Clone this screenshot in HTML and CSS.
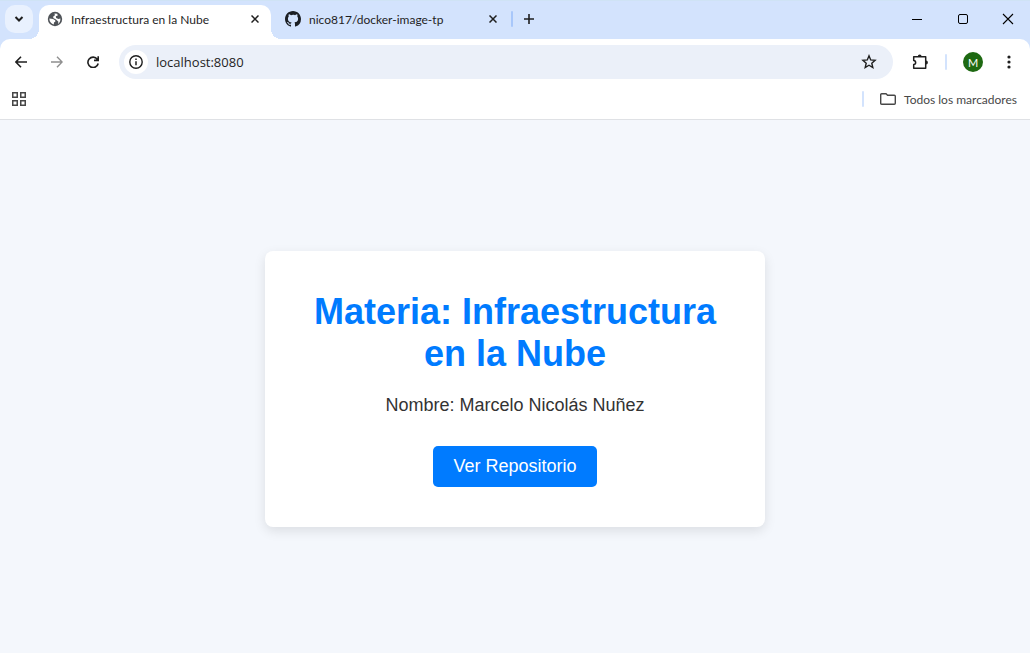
FILE: index.html
```html
<!DOCTYPE html>
<html lang="es">
<head>
<meta charset="utf-8">
<meta name="viewport" content="width=device-width, initial-scale=1">
<title>Infraestructura en la Nube</title>
<link rel="stylesheet" href="styles.css">
</head>
<body class="window">
<header class="chrome">
  <div class="tab-strip">
    <button class="tab-search" aria-label="Buscar pestañas">
      <svg width="10" height="8" viewBox="0 0 10 8"><path d="M1.5 2 5 5.5 8.5 2" fill="none" stroke="currentColor" stroke-width="2"/></svg>
    </button>
    <div class="tab tab-active">
      <svg class="favicon" width="16" height="16" viewBox="0 0 16 16"><circle cx="8" cy="8" r="7.2" fill="#4f5358"/><path d="M2.4 7.4 6 8.1 8.2 9.2 8.4 10.6 7 11.4 6.8 13.4C4.4 13 2.4 10.8 2.4 8ZM7.4 2.6 10.2 2.8 10.8 4.4 8.8 5.2 9.2 7 11.4 8 13.4 7.4C13.6 10 12.6 11.8 11 12.9L11.4 10.8 9 8.6 6.2 7 6.4 5.2 8 4.2Z" fill="#fff"/></svg>
      <span class="tab-title">Infraestructura en la Nube</span>
      <button class="tab-close" aria-label="Cerrar pestaña"><svg width="8" height="8" viewBox="0 0 8 8"><path d="m.5.5 7 7m0-7-7 7" stroke="currentColor" stroke-width="1.5"/></svg></button>
    </div>
    <div class="tab">
      <svg class="favicon" width="16" height="16" viewBox="0 0 16 16"><path fill="#1b1f24" d="M8 0C3.58 0 0 3.58 0 8c0 3.54 2.29 6.53 5.47 7.59.4.07.55-.17.55-.38 0-.19-.01-.82-.01-1.49-2.01.37-2.53-.49-2.69-.94-.09-.23-.48-.94-.82-1.13-.28-.15-.68-.52-.01-.53.63-.01 1.08.58 1.23.82.72 1.21 1.87.87 2.33.66.07-.52.28-.87.51-1.07-1.78-.2-3.64-.89-3.64-3.95 0-.87.31-1.59.82-2.15-.08-.2-.36-1.02.08-2.12 0 0 .67-.21 2.2.82A7.6 7.6 0 0 1 8 3.86c.68 0 1.36.09 2 .27 1.53-1.04 2.2-.82 2.2-.82.44 1.1.16 1.92.08 2.12.51.56.82 1.27.82 2.15 0 3.07-1.87 3.75-3.65 3.95.29.25.54.73.54 1.48 0 1.07-.01 1.93-.01 2.2 0 .21.15.46.55.38A8.01 8.01 0 0 0 16 8c0-4.42-3.58-8-8-8Z"/></svg>
      <span class="tab-title">nico817/docker-image-tp</span>
      <button class="tab-close" aria-label="Cerrar pestaña"><svg width="8" height="8" viewBox="0 0 8 8"><path d="m.5.5 7 7m0-7-7 7" stroke="currentColor" stroke-width="1.5"/></svg></button>
    </div>
    <span class="divider tab-divider"></span>
    <button class="new-tab" aria-label="Nueva pestaña"><svg width="10" height="10" viewBox="0 0 10 10"><path d="M5 0v10M0 5h10" stroke="currentColor" stroke-width="1.6"/></svg></button>
    <div class="window-controls">
      <button aria-label="Minimizar"><svg width="12" height="12" viewBox="0 0 12 12"><path d="M1 6.5h10" stroke="#000"/></svg></button>
      <button aria-label="Maximizar"><svg width="12" height="12" viewBox="0 0 12 12"><rect x="1.5" y="1.5" width="9" height="9" rx="1.5" fill="none" stroke="#000"/></svg></button>
      <button aria-label="Cerrar"><svg width="12" height="12" viewBox="0 0 12 12"><path d="m1 1 10 10M11 1 1 11" stroke="#000" stroke-width="1.1"/></svg></button>
    </div>
  </div>

  <div class="toolbar">
    <button class="tool" aria-label="Atrás"><svg width="12" height="12" viewBox="0 0 12 12"><path d="M12 6H1M6 .7.9 6 6 11.3" fill="none" stroke="currentColor" stroke-width="1.6"/></svg></button>
    <button class="tool" aria-label="Adelante" disabled><svg width="12" height="12" viewBox="0 0 12 12"><path d="M0 6h11M6 .7 11.1 6 6 11.3" fill="none" stroke="currentColor" stroke-width="1.4"/></svg></button>
    <button class="tool" aria-label="Recargar"><svg width="12" height="12" viewBox="0 0 12 12"><path d="M10.3 3.2A5.2 5.2 0 1 0 11.2 7.5M11.2.2v4.2H7" fill="none" stroke="currentColor" stroke-width="1.6"/></svg></button>
    <form class="address-bar">
      <button class="site-info" type="button" aria-label="Información del sitio"><svg width="14" height="14" viewBox="0 0 14 14"><circle cx="7" cy="7" r="6.2" fill="none" stroke="currentColor" stroke-width="1.4"/><path d="M7 6.2v4M7 3.6v1.5" stroke="currentColor" stroke-width="1.5"/></svg></button>
      <input class="address" type="text" value="localhost:8080" aria-label="Dirección" spellcheck="false">
      <button class="bookmark-star" type="button" aria-label="Añadir a marcadores"><svg width="16" height="16" viewBox="0 0 16 16"><path d="m8 1.8 1.7 4.1 4.4.4-3.3 2.9 1 4.3L8 11.2l-3.8 2.3 1-4.3-3.3-2.9 4.4-.4Z" fill="none" stroke="currentColor" stroke-width="1.4"/></svg></button>
    </form>
    <button class="extensions" aria-label="Extensiones"><svg width="18" height="18" viewBox="0 0 18 18"><path d="M2.7 3.7h12v11.6h-12v-3.7c2.6-.2 2.6-4 0-4.2Z" fill="none" stroke="currentColor" stroke-width="1.5" stroke-linejoin="round"/><path d="M6.8 3.4a1.9 1.9 0 0 1 3.8 0M15 7.6a1.9 1.9 0 0 1 0 3.8" fill="currentColor"/></svg></button>
    <span class="divider"></span>
    <button class="avatar" aria-label="Perfil">M</button>
    <button class="menu" aria-label="Menú"><svg width="4" height="14" viewBox="0 0 4 14"><g fill="currentColor"><circle cx="2" cy="2" r="1.6"/><circle cx="2" cy="7" r="1.6"/><circle cx="2" cy="12" r="1.6"/></g></svg></button>
  </div>

  <nav class="bookmarks" aria-label="Marcadores">
    <button class="apps" aria-label="Aplicaciones"><svg width="14" height="14" viewBox="0 0 14 14"><path d="M.75.75h4.5v4.5H.75ZM8.75.75h4.5v4.5h-4.5ZM.75 8.75h4.5v4.5H.75ZM8.75 8.75h4.5v4.5h-4.5Z" fill="none" stroke="currentColor" stroke-width="1.5"/></svg></button>
    <span class="divider"></span>
    <button class="all-bookmarks"><svg width="16" height="12" viewBox="0 0 16 12"><path d="M.7 1.7q0-1 1-1H6l1.6 1.6h6.7q1 0 1 1v7q0 1-1 1H1.7q-1 0-1-1Z" fill="none" stroke="currentColor" stroke-width="1.4"/></svg>Todos los marcadores</button>
  </nav>
</header>

<main class="page">
  <section class="card">
    <h1 class="card-title">Materia: Infraestructura en la Nube</h1>
    <p class="card-text">Nombre: Marcelo Nicolás Nuñez</p>
    <a class="card-link" href="#repositorio">Ver Repositorio</a>
  </section>
</main>
</body>
</html>
```

FILE: styles.css
```css
* {
  box-sizing: border-box;
}

.window {
  display: flex;
  flex-direction: column;
  min-height: 100vh;
  margin: 0;
  background: #f4f7fc;
  font-family: "Liberation Sans", Arial, sans-serif;
}

button {
  display: flex;
  align-items: center;
  justify-content: center;
  flex: none;
  padding: 0;
  border: 0;
  background: none;
  color: inherit;
  font: inherit;
}

svg {
  display: block;
  flex: none;
}

.chrome {
  background: #d3e3fd;
  border-bottom: 1px solid #dfe1e5;
  color: #1f1f1f;
  font-family: Lato, "Open Sans", sans-serif;
  font-size: 12px;
}

.tab-strip {
  display: flex;
  height: 39px;
  padding: 4px 0 0 5px;
  border-top: 1px solid #cfe3f5;
}

.tab-search {
  width: 28px;
  height: 28px;
  margin-right: 6px;
  border-radius: 10px;
  background: #e9f1fe;
}

.tab {
  display: flex;
  align-items: center;
  width: 232px;
  height: 28px;
  padding: 0 7px 0 8px;
}

.tab-active {
  position: relative;
  height: 34px;
  padding-bottom: 6px;
  border-radius: 10px 10px 0 0;
  background: #fff;
}

.tab-active::before,
.tab-active::after {
  position: absolute;
  bottom: 0;
  width: 10px;
  height: 10px;
  content: "";
}

.tab-active::before {
  right: 100%;
  background: radial-gradient(circle at 0 0, transparent 10px, #fff 10px);
}

.tab-active::after {
  left: 100%;
  background: radial-gradient(circle at 100% 0, transparent 10px, #fff 10px);
}

.tab + .tab {
  width: 240px;
  padding: 0 9px 0 14px;
}

.tab-title {
  flex: 1;
  margin-left: 8px;
  overflow: hidden;
  white-space: nowrap;
}

.tab-close {
  width: 18px;
  height: 18px;
}

.divider {
  flex: none;
  width: 2px;
  height: 16px;
  border-radius: 1px;
  background: #d3e3fd;
}

.tab-divider {
  margin-top: 6px;
  background: #a8c7fa;
}

.new-tab {
  width: 32px;
  height: 28px;
}

.window-controls {
  display: flex;
  height: 28px;
  margin-left: auto;
}

.window-controls button {
  width: 46px;
}

.window-controls button:last-child {
  width: 44px;
}

.toolbar {
  display: flex;
  align-items: center;
  height: 46px;
  padding: 0 11px 0 6px;
  border-radius: 10px 10px 0 0;
  background: #fff;
}

.tool {
  width: 30px;
  height: 30px;
  margin-right: 6px;
}

.tool:disabled {
  color: #8f8f8f;
}

.address-bar {
  display: flex;
  align-items: center;
  flex: 1;
  height: 34px;
  margin-left: 5px;
  padding: 0 12px 0 5px;
  border-radius: 17px;
  background: #ebf0f9;
}

.site-info {
  width: 24px;
  height: 24px;
  border-radius: 50%;
  background: #fff;
}

.address {
  flex: 1;
  min-width: 0;
  height: 24px;
  margin-left: 8px;
  padding: 0;
  border: 0;
  outline: 0;
  background: none;
  color: #1f1f1f;
  font: 13px "Open Sans", "Noto Sans", sans-serif;
}

.bookmark-star {
  width: 24px;
  height: 24px;
}

.extensions {
  width: 34px;
  height: 34px;
  margin: 0 8px 0 10px;
}

.avatar {
  width: 20px;
  height: 20px;
  margin: 0 16px;
  border-radius: 50%;
  background: #1e6912;
  color: #fff;
  font-size: 11px;
}

.menu {
  width: 20px;
  height: 28px;
}

.bookmarks {
  display: flex;
  align-items: center;
  height: 34px;
  padding: 0 13px 6px 12px;
  background: #fff;
  color: #474747;
}

.apps {
  margin-right: auto;
}

.all-bookmarks {
  gap: 8px;
  margin-left: 16px;
}

.page {
  display: flex;
  align-items: center;
  justify-content: center;
  flex: 1;
  padding: 25px 20px 20px;
}

.card {
  width: 100%;
  max-width: 500px;
  padding: 40px;
  border-radius: 8px;
  background: #fff;
  box-shadow: 0 4px 12px rgba(0, 0, 0, 0.1);
  color: #333;
  font-size: 18px;
  text-align: center;
}

.card-title {
  margin: 0 0 20px;
  color: #007bff;
  font-size: 36px;
  line-height: 42px;
}

.card-text {
  margin: 0 0 30px;
  line-height: 21px;
}

.card-link {
  display: inline-block;
  padding: 10px 20px;
  border-radius: 5px;
  background: #007bff;
  color: #fff;
  line-height: 21px;
  text-decoration: none;
  vertical-align: top;
}
```
